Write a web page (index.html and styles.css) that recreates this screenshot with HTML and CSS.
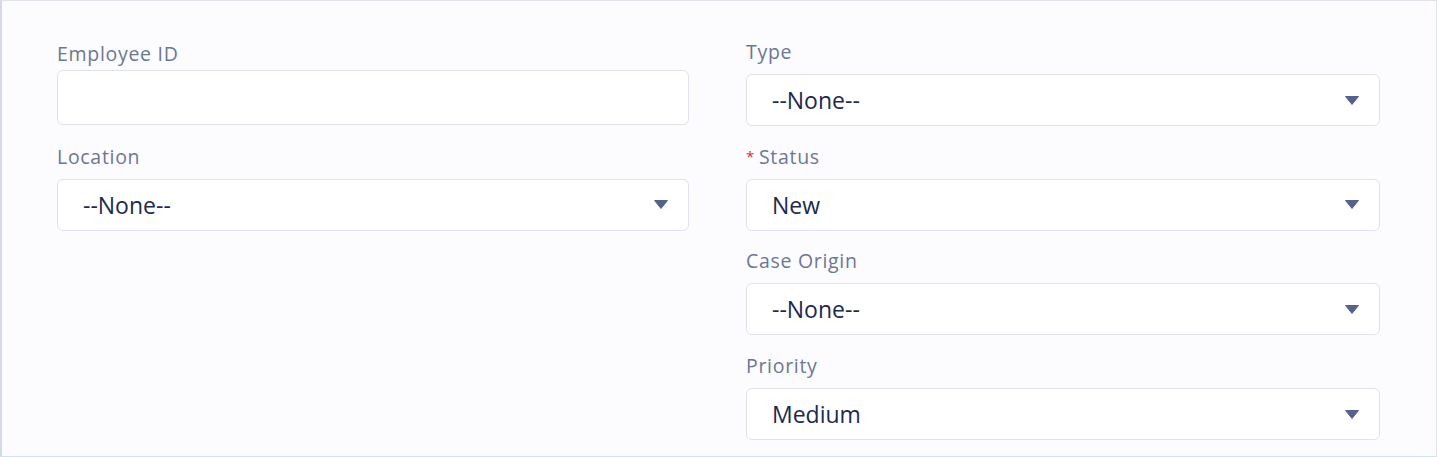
FILE: index.html
```html
<!DOCTYPE html>
<html>
<head>
<meta charset="utf-8">
<link rel="stylesheet" href="styles.css">
</head>
<body>
<div class="frame">
  <div class="col">
    <div class="field first-left">
      <div class="label">Employee ID</div>
      <div class="input tall"></div>
    </div>
    <div class="field">
      <div class="label">Location</div>
      <div class="input select"><span class="value">--None--</span><svg class="arrow" width="14" height="9" viewBox="0 0 14 9"><path d="M0.5 0.5 H13.5 L7 8.5 Z" fill="#56628a" stroke="#56628a" stroke-linejoin="round"/></svg></div>
    </div>
  </div>
  <div class="col">
    <div class="field">
      <div class="label">Type</div>
      <div class="input select"><span class="value">--None--</span><svg class="arrow" width="14" height="9" viewBox="0 0 14 9"><path d="M0.5 0.5 H13.5 L7 8.5 Z" fill="#56628a" stroke="#56628a" stroke-linejoin="round"/></svg></div>
    </div>
    <div class="field">
      <div class="label"><abbr class="req">*</abbr>Status</div>
      <div class="input select"><span class="value">New</span><svg class="arrow" width="14" height="9" viewBox="0 0 14 9"><path d="M0.5 0.5 H13.5 L7 8.5 Z" fill="#56628a" stroke="#56628a" stroke-linejoin="round"/></svg></div>
    </div>
    <div class="field">
      <div class="label">Case Origin</div>
      <div class="input select"><span class="value">--None--</span><svg class="arrow" width="14" height="9" viewBox="0 0 14 9"><path d="M0.5 0.5 H13.5 L7 8.5 Z" fill="#56628a" stroke="#56628a" stroke-linejoin="round"/></svg></div>
    </div>
    <div class="field">
      <div class="label">Priority</div>
      <div class="input select"><span class="value">Medium</span><svg class="arrow" width="14" height="9" viewBox="0 0 14 9"><path d="M0.5 0.5 H13.5 L7 8.5 Z" fill="#56628a" stroke="#56628a" stroke-linejoin="round"/></svg></div>
    </div>
  </div>
</div>
</body>
</html>
```

FILE: styles.css
```css
html, body {
  margin: 0;
  padding: 0;
  background: #fcfbfe;
}
.frame {
  box-sizing: border-box;
  width: 1437px;
  height: 457px;
  border-top: 1px solid #e1e3ea;
  border-left: 2px solid #d6dae6;
  border-right: 1px solid #e3e6ee;
  border-bottom: 1px solid #cde6f6;
  background: #fcfbfe;
  padding: 39px 56px 0 55px;
  display: grid;
  grid-template-columns: 632px 634px;
  column-gap: 57px;
  font-family: "Open Sans", "Liberation Sans", sans-serif;
}
.col {
  display: flex;
  flex-direction: column;
  gap: 18.7px;
}
.field {
  display: flex;
  flex-direction: column;
  gap: 10px;
}
.label {
  height: 24px;
  line-height: 24px;
  font-size: 19.5px;
  color: #6c7792;
  letter-spacing: 0.7px;
}
.req {
  color: #c23934;
  text-decoration: none;
  font-size: 15px;
  margin-right: 4px;
  position: relative;
  top: -2px;
}
.first-left {
  margin-top: 2px;
  gap: 4px;
}
.first-left + .field {
  margin-top: 1px;
}
.input {
  box-sizing: border-box;
  height: 52px;
  background: #ffffff;
  border: 1px solid #dfe2ec;
  border-radius: 6px;
  display: flex;
  align-items: center;
  padding: 0 20px 0 25px;
}
.input.tall {
  height: 55px;
}
.value {
  flex: 1;
  font-size: 23px;
  color: #1d2a4e;
}
.arrow {
  display: block;
}
```
